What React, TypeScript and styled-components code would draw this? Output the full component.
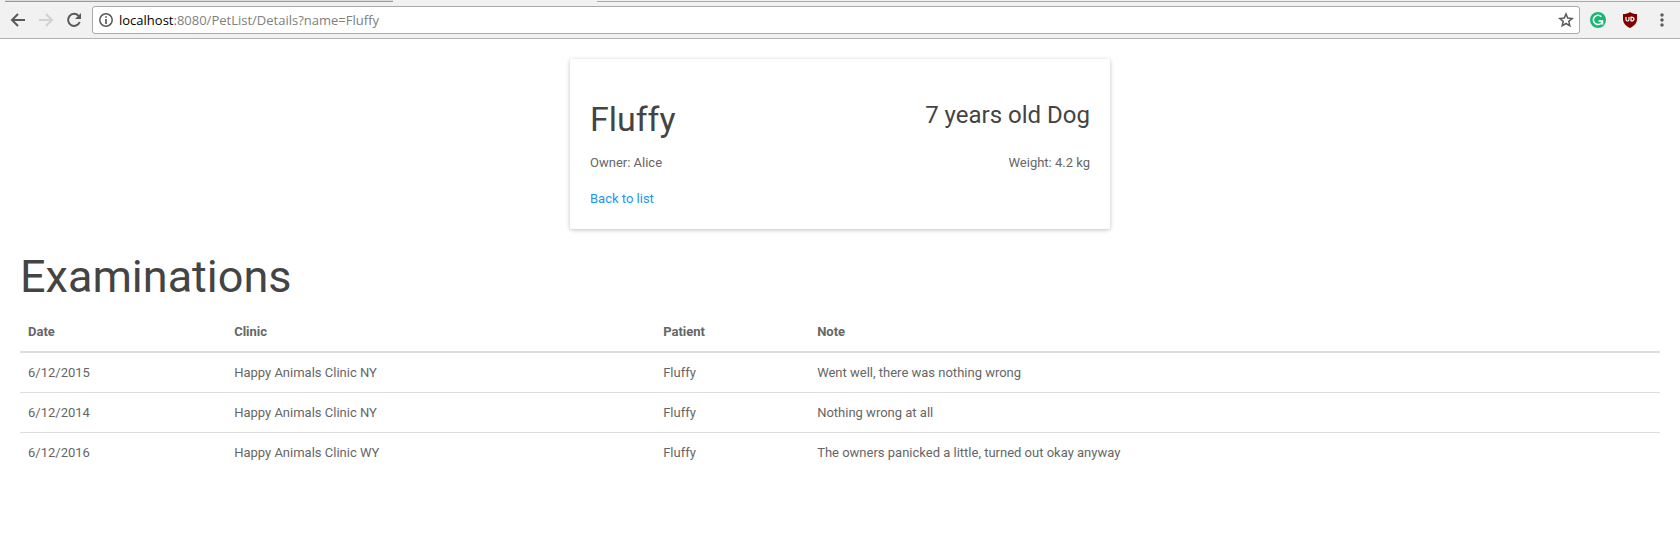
import React from "react";
import styled, { createGlobalStyle } from "styled-components";

const GlobalStyle = createGlobalStyle`
  * { box-sizing: border-box; }
  body {
    margin: 0;
    background: #fff;
    color: #666;
    font: 13px/24px Roboto, "Liberation Sans", sans-serif;
  }
`;

const TabStrip = styled.div`
  display: flex;
  justify-content: space-between;
  height: 2px;
  padding-left: 5px;
  background: #f1f1f1;
`;

const InactiveTabs = styled.div`
  display: flex;
  width: 388px;
  background: #dcdcdc;
  border-bottom: 1px solid #999;
`;

const StripRest = styled.div`
  width: calc(100% - 592px);
  border-bottom: 1px solid #a9a9a9;
`;

const Toolbar = styled.header`
  display: flex;
  align-items: center;
  height: 37px;
  padding-left: 8px;
  background: #f1f1f1;
  border-bottom: 1px solid #b2b2b2;
`;

const ToolButton = styled.button<{ $width: number }>`
  display: flex;
  flex: none;
  align-items: center;
  justify-content: center;
  width: ${(p) => p.$width}px;
  height: 28px;
  padding: 0;
  border: 0;
  background: transparent;
  color: #5a5a5a;

  &:disabled { color: #d2d2d2; }
`;

const AddressBar = styled.div`
  display: flex;
  flex: 1;
  align-items: center;
  height: 28px;
  margin-left: 8px;
  padding: 0 4px 0 6px;
  background: #fff;
  border: 1px solid #a9a9a9;
  border-radius: 3px;
`;

const Url = styled.a`
  flex: 1;
  padding-left: 6px;
  color: #808080;
  font: 13px/24px "Open Sans", "Noto Sans", sans-serif;
  text-decoration: none;
`;

const Host = styled.span`
  color: #000;
`;

const Page = styled.main`
  padding: 20px;
`;

const Card = styled.section`
  display: flex;
  justify-content: space-between;
  max-width: 540px;
  margin: 0 auto;
  padding: 20px 20px 6px;
  border-radius: 2px;
  box-shadow: 0 1px 4px rgba(0, 0, 0, 0.25);
`;

const CardColumn = styled.div<{ $align: "left" | "right" }>`
  text-align: ${(p) => p.$align};
`;

const PetName = styled.h2`
  margin: 23px 0 14px;
  color: #444;
  font-size: 34px;
  font-weight: 400;
  line-height: 35px;
`;

const PetAge = styled.h3`
  margin: 23px 0;
  color: #444;
  font-size: 24px;
  font-weight: 400;
  line-height: 26px;
`;

const Line = styled.p`
  margin: 0 0 12px;
`;

const BackLink = styled.a`
  color: #2196f3;
  text-decoration: none;
`;

const PageTitle = styled.h1`
  margin: 23px 0 11px;
  color: #444;
  font-size: 45px;
  font-weight: 400;
  line-height: 49px;
`;

const Table = styled.table`
  width: 100%;
  border-collapse: collapse;
  text-align: left;
`;

const HeadCell = styled.th<{ $width?: string }>`
  width: ${(p) => p.$width ?? "auto"};
  padding: 8px 8px 7px;
  border-bottom: 2px solid #ddd;
  font-weight: 700;
`;

const BodyRow = styled.tr`
  & + & { border-top: 1px solid #ddd; }
`;

const Cell = styled.td`
  height: 40px;
  padding: 8px 8px 7px;
`;

const COLUMNS = [
  { label: "Date", width: "12.57%" },
  { label: "Clinic", width: "26.16%" },
  { label: "Patient", width: "9.39%" },
  { label: "Note", width: undefined },
];

const EXAMINATIONS = [
  ["6/12/2015", "Happy Animals Clinic NY", "Fluffy", "Went well, there was nothing wrong"],
  ["6/12/2014", "Happy Animals Clinic NY", "Fluffy", "Nothing wrong at all"],
  ["6/12/2016", "Happy Animals Clinic WY", "Fluffy", "The owners panicked a little, turned out okay anyway"],
];

const Arrow = ({ flip }: { flip?: boolean }) => (
  <svg width="16" height="16" viewBox="0 0 16 16" fill="none" stroke="currentColor" strokeWidth="2">
    <path d={flip ? "M1 8h13M8 2l6 6-6 6" : "M15 8H2M8 2L2 8l6 6"} />
  </svg>
);

const Reload = () => (
  <svg width="16" height="16" viewBox="0 0 16 16" fill="none">
    <path d="M12.600 3.900A6 6 0 1 0 13.700 10" stroke="currentColor" strokeWidth="2" />
    <path d="M15 1v6H9z" fill="currentColor" />
  </svg>
);

const Info = () => (
  <svg width="14" height="14" viewBox="0 0 14 14" fill="none" stroke="#5a5a5a">
    <circle cx="7" cy="7" r="6.200" strokeWidth="1.500" />
    <path d="M7 3.200v1.600M7 6v5" strokeWidth="1.700" />
  </svg>
);

const Star = () => (
  <svg width="16" height="16" viewBox="0 0 16 16" fill="none" stroke="#5a5a5a" strokeWidth="1.500">
    <path d="M8 2l1.700 4.100 4.500.4-3.400 2.900 1 4.400L8 11.500l-3.800 2.300 1-4.400L1.800 6.500l4.500-.4z" />
  </svg>
);

const Grammarly = () => (
  <svg width="16" height="16" viewBox="0 0 16 16" fill="none">
    <circle cx="8" cy="8" r="8" fill="#1cb674" />
    <path d="M11.300 4.700A4.600 4.600 0 1 0 12.400 9.200M8.500 9h4v3.500" stroke="#fff" strokeWidth="1.500" />
  </svg>
);

const Shield = () => (
  <svg width="16" height="16" viewBox="0 0 16 16" fill="none">
    <path d="M8 0c2 1.500 4 2 7 2v5c0 4-2.500 7-7 9-4.500-2-7-5-7-9V2c3 0 5-.5 7-2z" fill="#800000" />
    <path d="M4 5v2.500a1.500 1.500 0 0 0 3 0V5M9 5.200v3.600c4 .5 4-4 0-3.600z" stroke="#fff" strokeWidth="1.200" />
  </svg>
);

const Dots = () => (
  <svg width="4" height="14" viewBox="0 0 4 14" fill="currentColor">
    <circle cx="2" cy="2" r="1.700" />
    <circle cx="2" cy="7" r="1.700" />
    <circle cx="2" cy="12" r="1.700" />
  </svg>
);

export default function App() {
  return (
    <>
      <GlobalStyle />
      <TabStrip>
        <InactiveTabs />
        <StripRest />
      </TabStrip>
      <Toolbar>
        <ToolButton $width={20} aria-label="Back"><Arrow /></ToolButton>
        <ToolButton $width={36} aria-label="Forward" disabled><Arrow flip /></ToolButton>
        <ToolButton $width={20} aria-label="Reload"><Reload /></ToolButton>
        <AddressBar>
          <Info />
          <Url href="http://localhost:8080/PetList/Details?name=Fluffy">
            <Host>localhost</Host>:8080/PetList/Details?name=Fluffy
          </Url>
          <ToolButton $width={18} aria-label="Bookmark"><Star /></ToolButton>
        </AddressBar>
        <ToolButton $width={36} aria-label="Grammarly"><Grammarly /></ToolButton>
        <ToolButton $width={28} aria-label="uBlock"><Shield /></ToolButton>
        <ToolButton $width={36} aria-label="Menu"><Dots /></ToolButton>
      </Toolbar>
      <Page>
        <Card>
          <CardColumn $align="left">
            <PetName>Fluffy</PetName>
            <Line>Owner: Alice</Line>
            <Line><BackLink href="/PetList">Back to list</BackLink></Line>
          </CardColumn>
          <CardColumn $align="right">
            <PetAge>7 years old Dog</PetAge>
            <Line>Weight: 4.2 kg</Line>
          </CardColumn>
        </Card>
        <PageTitle>Examinations</PageTitle>
        <Table>
          <thead>
            <tr>
              {COLUMNS.map((c) => (
                <HeadCell key={c.label} $width={c.width} scope="col">{c.label}</HeadCell>
              ))}
            </tr>
          </thead>
          <tbody>
            {EXAMINATIONS.map((row) => (
              <BodyRow key={row[0]}>
                {row.map((value) => <Cell key={value}>{value}</Cell>)}
              </BodyRow>
            ))}
          </tbody>
        </Table>
      </Page>
    </>
  );
}
